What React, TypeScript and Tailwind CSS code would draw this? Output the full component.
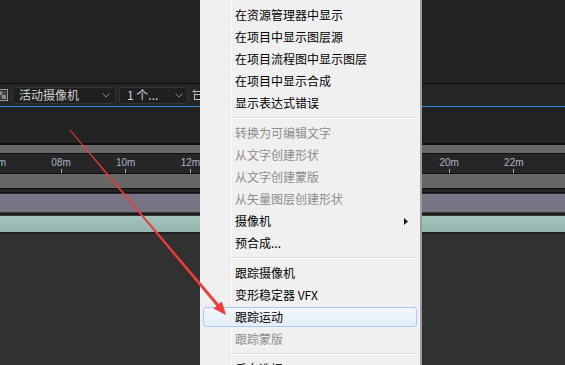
import React from "react";

type MenuEntry =
  | { kind: "item"; label: string; disabled?: boolean; submenu?: boolean; active?: boolean }
  | { kind: "sep" };

const menu: MenuEntry[] = [
  { kind: "item", label: "在资源管理器中显示" },
  { kind: "item", label: "在项目中显示图层源" },
  { kind: "item", label: "在项目流程图中显示图层" },
  { kind: "item", label: "在项目中显示合成" },
  { kind: "item", label: "显示表达式错误" },
  { kind: "sep" },
  { kind: "item", label: "转换为可编辑文字", disabled: true },
  { kind: "item", label: "从文字创建形状", disabled: true },
  { kind: "item", label: "从文字创建蒙版", disabled: true },
  { kind: "item", label: "从矢量图层创建形状", disabled: true },
  { kind: "item", label: "摄像机", submenu: true },
  { kind: "item", label: "预合成..." },
  { kind: "sep" },
  { kind: "item", label: "跟踪摄像机" },
  { kind: "item", label: "变形稳定器 VFX" },
  { kind: "item", label: "跟踪运动", active: true },
  { kind: "item", label: "跟踪蒙版", disabled: true },
  { kind: "sep" },
  { kind: "item", label: "反向选择" },
];

// labels under the menu are left blank, the popup covers them
const rulerLabels = ["06m", "08m", "10m", "12m", "", "", "", "20m", "22m", ""];

function Chevron() {
  return (
    <svg width="8" height="5" viewBox="0 0 8 5" aria-hidden="true">
      <path d="M0.5 0.5 L4 4 L7.5 0.5" fill="none" stroke="#8c8c8c" strokeWidth="1" />
    </svg>
  );
}

function Toolbar() {
  return (
    <div className="flex items-center h-[22px] bg-[#262626] text-[12px] text-[#cfcfcf]">
      {/* transparency grid toggle, cut at the left edge */}
      <svg width="12" height="12" viewBox="0 0 12 12" className="ml-[-4px] shrink-0" aria-hidden="true">
        <rect x="0.5" y="0.5" width="11" height="11" fill="#2a2a2a" stroke="#9a9a9a" />
        <rect x="2" y="2" width="4" height="4" fill="#8a8a8a" />
        <rect x="6" y="6" width="4" height="4" fill="#8a8a8a" />
        <rect x="6" y="2" width="4" height="4" fill="#4a4a4a" />
        <rect x="2" y="6" width="4" height="4" fill="#4a4a4a" />
      </svg>

      <div className="ml-[4px] flex items-center justify-between w-[104px] h-[17px] pl-[6px] pr-[5px] bg-[#1f1f1f] border border-[#353535] rounded-[3px]">
        <span className="leading-none">活动摄像机</span>
        <Chevron />
      </div>

      <div className="ml-[3px] flex items-center justify-between w-[69px] h-[17px] pl-[7px] pr-[4px] bg-[#1f1f1f] border border-[#353535] rounded-[3px]">
        <span className="leading-none">1 个...</span>
        <Chevron />
      </div>

      {/* reset exposure icon, partly hidden under the menu */}
      <svg width="10" height="12" viewBox="0 0 10 12" className="ml-[4px] shrink-0" aria-hidden="true">
        <path d="M1 2.5 H8" stroke="#bdbdbd" strokeWidth="1" />
        <path d="M3 0.5 L1 2.5 L3 4.5" fill="none" stroke="#bdbdbd" strokeWidth="1" />
        <rect x="2.5" y="5.5" width="6" height="5" fill="none" stroke="#bdbdbd" />
      </svg>
    </div>
  );
}

function Ruler() {
  return (
    <div className="h-[19px] bg-[#262626] overflow-hidden">
      <div className="flex ml-[-36px]">
        {rulerLabels.map((l, i) => (
          <div key={i} className="w-[64.7px] shrink-0 flex flex-col items-center">
            <span
              className="mt-[3px] h-[11px] leading-[11px] text-[10px] text-[#aab4c4]"
              style={{ fontFamily: '"Liberation Sans", Arial, sans-serif' }}
            >
              {l}
            </span>
            <div className="mt-[1px] w-px h-[4px] bg-[#b0b0b0]" />
          </div>
        ))}
      </div>
    </div>
  );
}

function ContextMenu() {
  return (
    <div
      className="absolute left-[200px] top-0 w-[222px] h-[365px] bg-[#f0f0f0] border-r-2 border-[#9c9c9c] pt-[4px]"
      style={{ fontFamily: '"Noto Sans CJK SC", "Microsoft YaHei", sans-serif' }}
    >
      {/* icon gutter divider */}
      <div className="absolute left-[29px] top-0 bottom-0 w-[2px] border-l border-[#e2e3e3] bg-white" />

      {menu.map((m, i) =>
        m.kind === "sep" ? (
          <div key={i} className="relative h-[8px] flex flex-col justify-center ml-[31px] mr-[3px]">
            <div className="h-px bg-[#e0e0e0]" />
            <div className="h-px bg-white" />
          </div>
        ) : (
          <div key={i} className="relative h-[22px] flex items-center">
            {m.active && (
              <div className="absolute left-[3px] right-[3px] top-[1px] bottom-[1px] rounded-[3px] border border-[#a9cbf2] bg-gradient-to-b from-[#f3f7fc] to-[#e4edf9]" />
            )}
            <span
              className={`relative pl-[35px] text-[12px] leading-none ${
                m.disabled ? "text-[#8d8d8d]" : "text-black"
              }`}
            >
              {m.label}
            </span>
            {m.submenu && (
              <svg width="4" height="7" viewBox="0 0 4 7" className="absolute right-[12px]" aria-hidden="true">
                <path d="M0 0 L4 3.5 L0 7 Z" fill="#1a1a1a" />
              </svg>
            )}
          </div>
        )
      )}
    </div>
  );
}

function Arrow() {
  return (
    <svg
      width="565"
      height="365"
      viewBox="0 0 565 365"
      className="absolute left-0 top-0 pointer-events-none"
      aria-hidden="true"
    >
      <polygon
        points="69.62,130.32 70.38,129.68 218.77,304.09 221.82,301.51 226,315 213.42,308.61 216.47,306.03"
        fill="#f23a3a"
      />
    </svg>
  );
}

export default function App() {
  return (
    <div
      className="relative w-[565px] h-[365px] overflow-hidden bg-[#313131]"
      style={{ fontFamily: '"Noto Sans CJK SC", sans-serif' }}
    >
      <div className="flex flex-col">
        <div className="h-[83px] bg-[#232323]" />
        <div className="h-px bg-[#0c0c0c]" />
        <Toolbar />
        <div className="h-px bg-[#2a8ae6]" />
        <div className="h-[36px] bg-[#232323]" />
        <div className="h-[2px] bg-[#0e0e0e]" />
        <div className="h-[8px] bg-[#686868]" />
        <div className="h-px bg-[#0e0e0e]" />
        <Ruler />
        <div className="h-px bg-[#0e0e0e]" />
        <div className="h-[14px] bg-[#676767]" />
        <div className="h-px bg-[#0e0e0e]" />
        <div className="h-[3px] bg-[#252525]" />
        <div className="h-px bg-[#0e0e0e]" />
        <div className="h-px bg-[#2c2c2c]" />
        <div className="h-[18px] bg-[#777585]" />
        <div className="h-px bg-[#3a3a3a]" />
        <div className="h-[2px] bg-[#1c1c1c]" />
        <div className="h-px bg-[#3a3a3a]" />
        <div className="h-[16px] bg-gradient-to-b from-[#a3c4bc] to-[#95b6ae]" />
        <div className="h-[2px] bg-[#1f1f1f]" />
      </div>

      <ContextMenu />
      <Arrow />
    </div>
  );
}
